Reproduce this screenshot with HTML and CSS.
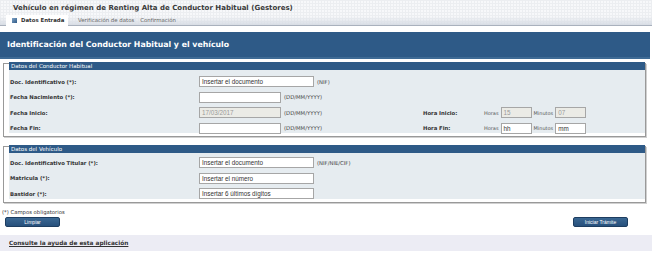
FILE: index.html
```html
<!DOCTYPE html>
<html lang="es">
<head>
<meta charset="utf-8">
<title>Renting</title>
<link rel="stylesheet" href="styles.css">
</head>
<body>
<div class="topbar">
  <div class="title">Vehículo en régimen de Renting Alta de Conductor Habitual (Gestores)</div>
  <div class="tabs">
    <div class="tab active"><span class="tab-icon"></span>Datos Entrada</div>
    <div class="tab">Verificación de datos</div>
    <div class="tab">Confirmación</div>
  </div>
</div>
<div class="header">Identificación del Conductor Habitual y el vehículo</div>

<div class="fieldset">
  <div class="legend">Datos del Conductor Habitual</div>
  <div class="content">
    <div class="row">
      <div class="label">Doc. Identificativo (*):</div>
      <div class="field"><span class="input w114">Insertar el documento</span><span class="hint">(NIF)</span></div>
    </div>
    <div class="row">
      <div class="label">Fecha Nacimiento (*):</div>
      <div class="field"><span class="input w81"></span><span class="hint">(DD/MM/YYYY)</span></div>
    </div>
    <div class="row">
      <div class="label">Fecha Inicio:</div>
      <div class="field"><span class="input w81 disabled">17/03/2017</span><span class="hint">(DD/MM/YYYY)</span></div>
      <div class="label">Hora Inicio:</div>
      <div class="time"><span class="small">Horas</span><span class="input w30 disabled">15</span><span class="small">Minutos</span><span class="input w30 disabled">07</span></div>
    </div>
    <div class="row">
      <div class="label">Fecha Fin:</div>
      <div class="field"><span class="input w81"></span><span class="hint">(DD/MM/YYYY)</span></div>
      <div class="label">Hora Fin:</div>
      <div class="time"><span class="small">Horas</span><span class="input w30">hh</span><span class="small">Minutos</span><span class="input w30">mm</span></div>
    </div>
  </div>
</div>

<div class="fieldset second">
  <div class="legend">Datos del Vehículo</div>
  <div class="content">
    <div class="row">
      <div class="label">Doc. Identificativo Titular (*):</div>
      <div class="field"><span class="input w114">Insertar el documento</span><span class="hint">(NIF/NIE/CIF)</span></div>
    </div>
    <div class="row">
      <div class="label">Matricula (*):</div>
      <div class="field"><span class="input w114">Insertar el número</span></div>
    </div>
    <div class="row">
      <div class="label">Bastidor (*):</div>
      <div class="field"><span class="input w114">Insertar 6 últimos dígitos</span></div>
    </div>
  </div>
</div>

<div class="note">(*) Campos obligatorios</div>
<div class="buttons">
  <span class="btn">Limpiar</span>
  <span class="btn">Iniciar Trámite</span>
</div>
<div class="help"><a href="#">Consulte la ayuda de esta aplicación</a></div>
</body>
</html>
```

FILE: styles.css
```css
html, body {
  margin: 0;
  padding: 0;
  background: #ffffff;
}
body {
  width: 652px;
  height: 253px;
  overflow: hidden;
  font-family: "DejaVu Sans", Verdana, sans-serif;
  color: #333333;
}
.topbar {
  height: 25px;
  border-bottom: 1px solid #a9b1bd;
  background-color: #f7f8fa;
  background-image:
    linear-gradient(to bottom, rgba(255,255,255,0) 65%, #d8dde5 100%),
    repeating-linear-gradient(to right, #eceef1 0, #eceef1 1px, transparent 1px, transparent 3px),
    repeating-linear-gradient(to bottom, #eceef1 0, #eceef1 1px, transparent 1px, transparent 3px);
  display: flex;
  flex-direction: column;
}
.title {
  font-size: 7px;
  font-weight: bold;
  color: #3a3a3a;
  padding: 3px 0 0 13px;
  height: 10px;
  line-height: 10px;
}
.tabs {
  display: flex;
  align-items: flex-end;
  margin-top: 2px;
  margin-left: 6px;
  height: 12px;
}
.tab {
  font-size: 5.4px;
  color: #666666;
  padding: 0 3px;
  height: 11px;
  line-height: 11px;
  display: flex;
  align-items: center;
}
.tab.active {
  background: #ffffff;
  color: #333333;
  font-weight: bold;
  width: 62px;
  box-sizing: border-box;
  margin-right: 7px;
  padding-left: 6px;
}
.tab-icon {
  display: inline-block;
  width: 5px;
  height: 5px;
  background: linear-gradient(135deg, #7fa3c7 0%, #2e5986 100%);
  margin-right: 4px;
}
.header {
  margin-top: 6px;
  width: 650px;
  height: 27px;
  background: #2e5a87;
  border-bottom: 2px solid #3f6b95;
  box-sizing: border-box;
  color: #ffffff;
  font-weight: bold;
  font-size: 7.8px;
  padding-left: 7px;
  display: flex;
  align-items: center;
}
.fieldset {
  margin: 4px 0 0 3px;
  width: 643px;
  box-sizing: border-box;
  border: 1px solid #999999;
  box-shadow: 1px 1px 0 #d0d0d0;
  padding: 0 0 3px 5px;
  height: 74px;
}
.fieldset.second {
  margin-top: 9px;
  height: 57px;
}
.legend {
  margin-top: -2px;
  height: 8px;
  line-height: 8px;
  background: #2e5a87;
  color: #ffffff;
  font-size: 5.5px;
  padding-left: 2px;
}
.content {
  background: #e6ecf0;
  height: calc(100% - 6px);
  padding-top: 4px;
  box-sizing: border-box;
}
.second .content {
  padding-top: 2px;
}
.row {
  display: grid;
  grid-template-columns: 190px 223px 62px 1fr;
  align-items: center;
  height: 15.5px;
}
.label {
  font-size: 5.3px;
  font-weight: bold;
  color: #333333;
  padding-left: 1px;
}
.field, .time {
  display: flex;
  align-items: center;
}
.input {
  display: inline-block;
  box-sizing: border-box;
  height: 11px;
  line-height: 9px;
  border: 1px solid #a6a6a6;
  background: #ffffff;
  font-family: "Liberation Sans", Arial, sans-serif;
  font-size: 6.3px;
  color: #333333;
  padding-left: 2px;
}
.input.disabled {
  background: #ebebe6;
  color: #9a9a9a;
}
.w114 { width: 115px; }
.w81 { width: 82px; }
.w30 { width: 31px; }
.hint {
  font-size: 5.3px;
  color: #444444;
  margin-left: 3px;
}
.small {
  font-size: 5px;
  color: #555555;
  margin: 0 2px 0 0;
}
.input + .small {
  margin-left: 2px;
}
.note {
  margin: 6px 0 0 2px;
  font-size: 5.3px;
  color: #333333;
  height: 6px;
  line-height: 6px;
}
.buttons {
  display: flex;
  justify-content: space-between;
  padding: 0 24px 0 5px;
  margin-top: 2px;
}
.btn {
  width: 55px;
  height: 10px;
  box-sizing: border-box;
  background: linear-gradient(to bottom, #3a6792, #27507c);
  border: 1px solid #1d3d60;
  border-radius: 2px;
  color: #ffffff;
  font-family: "Liberation Sans", Arial, sans-serif;
  font-size: 5px;
  display: flex;
  align-items: center;
  justify-content: center;
}
.help {
  margin-top: 8px;
  height: 16px;
  background: #ececf4;
  padding-left: 9px;
  display: flex;
  align-items: center;
}
.help a {
  font-size: 5.8px;
  font-weight: bold;
  color: #333333;
  text-decoration: underline;
}
```
